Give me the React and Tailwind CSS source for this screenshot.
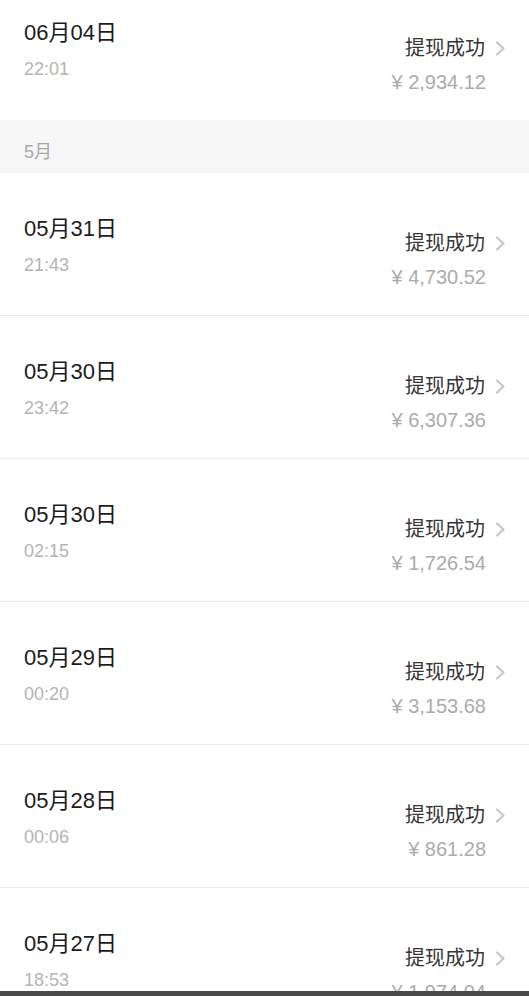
const records = [
  { date: '05月31日', time: '21:43', amount: '4,730.52' },
  { date: '05月30日', time: '23:42', amount: '6,307.36' },
  { date: '05月30日', time: '02:15', amount: '1,726.54' },
  { date: '05月29日', time: '00:20', amount: '3,153.68' },
  { date: '05月28日', time: '00:06', amount: '861.28' },
  { date: '05月27日', time: '18:53', amount: '1,974.04' },
];

const font = { fontFamily: '"Liberation Sans", "Noto Sans CJK SC", sans-serif' };

const Chevron = () => (
  <svg width="10" height="15" viewBox="0 0 10 15" fill="none" className="shrink-0">
    <polyline points="2,1.5 8.5,7.5 2,13.5" stroke="#c6c6c6" strokeWidth="2.2" strokeLinecap="round" strokeLinejoin="round" />
  </svg>
);

const Row = ({ date, time, amount, first }) => (
  <div
    className={`flex shrink-0 items-start justify-between border-b border-[#ebebeb] bg-white pl-[24px] pr-[24px] ${
      first ? 'h-[120px] border-b-0' : 'h-[143px]'
    }`}
  >
    <div className={first ? 'pt-[19px]' : 'pt-[42px]'}>
      <p className="text-[22px] leading-[28px] text-[#1c1c1c]">{date}</p>
      <p className="mt-[11px] text-[18px] leading-[22px] text-[#b4b4b4]">{time}</p>
    </div>
    <div className={`flex flex-col items-end ${first ? 'pt-[35px]' : 'pt-[57px]'}`}>
      <div className="flex items-center gap-[10px]">
        <span className="text-[20px] leading-[26px] text-[#363636]">提现成功</span>
        <Chevron />
      </div>
      <span className="mr-[19px] mt-[8px] text-[20px] leading-[26px] text-[#ababab]">¥ {amount}</span>
    </div>
  </div>
);

export default function App() {
  return (
    <div className="flex h-[996px] w-full flex-col overflow-hidden bg-white" style={font}>
      <div className="flex flex-1 flex-col overflow-hidden">
        <Row first date="06月04日" time="22:01" amount="2,934.12" />
        <div className="h-[53px] shrink-0 bg-[#f6f6f6] pl-[24px] pt-[20px]">
          <p className="text-[18px] leading-[24px] text-[#a8a8a8]">5月</p>
        </div>
        {records.map((r, i) => (
          <Row key={i} {...r} />
        ))}
      </div>
      <div className="h-[5px] shrink-0 bg-[#4a4a4a]" />
    </div>
  );
}
